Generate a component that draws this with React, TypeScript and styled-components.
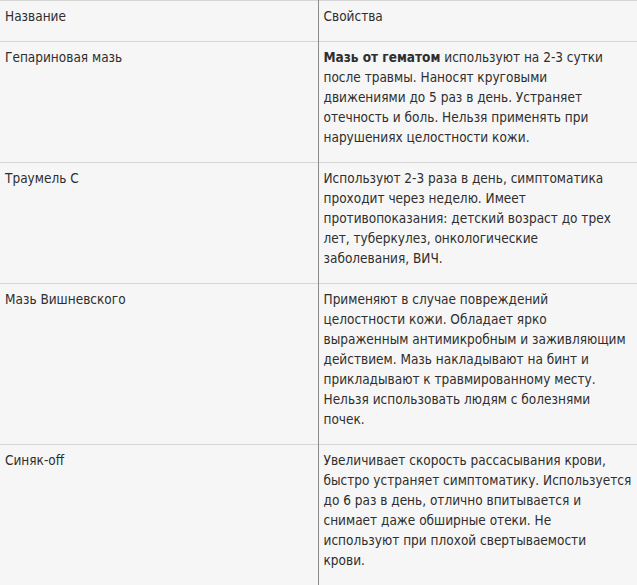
import styled, { createGlobalStyle } from 'styled-components'

const GlobalStyle = createGlobalStyle`
  body {
    margin: 0;
    background: #f6f6f6;
  }
`

const Table = styled.table`
  width: 637px;
  border-collapse: collapse;
  table-layout: fixed;
  font-family: "DejaVu Sans Condensed", "DejaVu Sans", sans-serif;
  font-size: 13.5px;
  line-height: 20px;
  color: #2e2e2e;
  border-top: 1px solid #d6d6d6;
`

const Row = styled.tr`
  border-bottom: 1px solid #d6d6d6;
`

const Cell = styled.td<{ $divider?: boolean }>`
  vertical-align: top;
  padding: ${p => (p.$divider ? '5px 0 15px 5px' : '5px 5px 15px 5px')};
  border-left: ${p => (p.$divider ? '1px solid #8a8a8a' : 'none')};
`

const Line = styled.span`
  display: block;
  white-space: nowrap;
`

const Strong = styled.b`
  font-weight: 700;
`

const NameCol = styled.col`
  width: 318px;
`

type Item = {
  name: string
  bold?: string
  lines: string[]
}

const items: Item[] = [
  {
    name: 'Гепариновая мазь',
    bold: 'Мазь от гематом',
    lines: [
      ' используют на 2-3 сутки',
      'после травмы. Наносят круговыми',
      'движениями до 5 раз в день. Устраняет',
      'отечность и боль. Нельзя применять при',
      'нарушениях целостности кожи.',
    ],
  },
  {
    name: 'Траумель С',
    lines: [
      'Используют 2-3 раза в день, симптоматика',
      'проходит через неделю. Имеет',
      'противопоказания: детский возраст до трех',
      'лет, туберкулез, онкологические',
      'заболевания, ВИЧ.',
    ],
  },
  {
    name: 'Мазь Вишневского',
    lines: [
      'Применяют в случае повреждений',
      'целостности кожи. Обладает ярко',
      'выраженным антимикробным и заживляющим',
      'действием. Мазь накладывают на бинт и',
      'прикладывают к травмированному месту.',
      'Нельзя использовать людям с болезнями',
      'почек.',
    ],
  },
  {
    name: 'Синяк-off',
    lines: [
      'Увеличивает скорость рассасывания крови,',
      'быстро устраняет симптоматику. Используется',
      'до 6 раз в день, отлично впитывается и',
      'снимает даже обширные отеки. Не',
      'используют при плохой свертываемости',
      'крови.',
    ],
  },
]

const App = () => {
  return (
    <>
      <GlobalStyle />
      <Table>
        <colgroup>
          <NameCol />
          <col />
        </colgroup>
        <tbody>
          <Row>
            <Cell>Название</Cell>
            <Cell $divider>Свойства</Cell>
          </Row>
          {items.map(item => (
            <Row key={item.name}>
              <Cell>{item.name}</Cell>
              <Cell $divider>
                {item.lines.map((line, i) => (
                  <Line key={i}>
                    {i === 0 && item.bold && <Strong>{item.bold}</Strong>}
                    {line}
                  </Line>
                ))}
              </Cell>
            </Row>
          ))}
        </tbody>
      </Table>
    </>
  )
}

export default App
